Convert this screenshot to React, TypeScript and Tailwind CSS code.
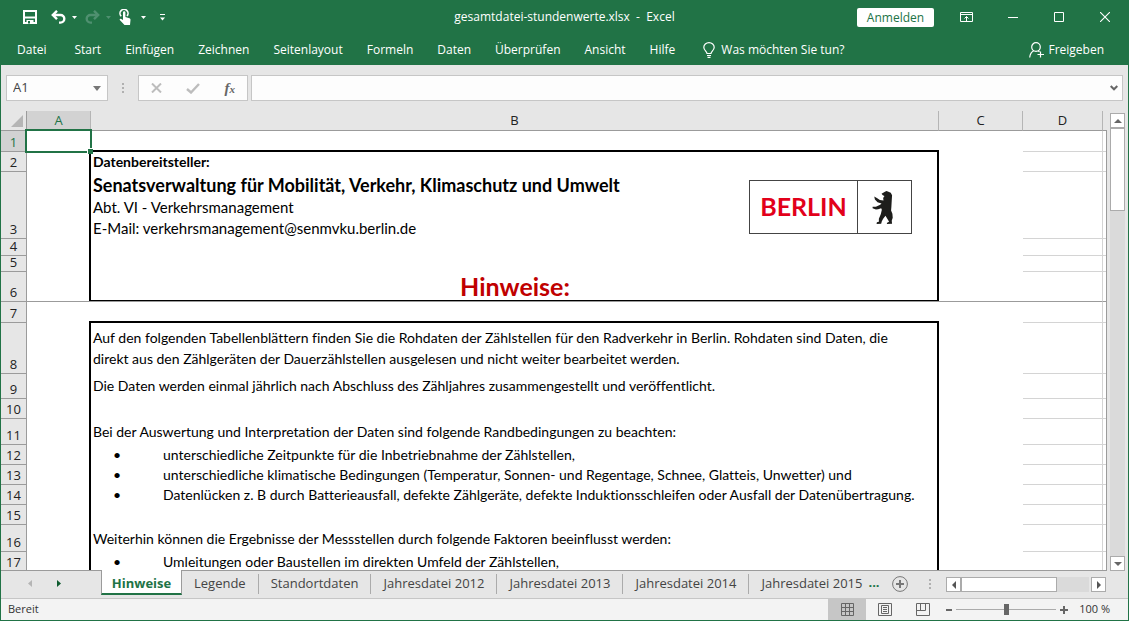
import type { ReactNode } from "react";

const UI = "font-['Open_Sans','Noto_Sans',sans-serif]";
const SHEET = "font-['Lato','Liberation_Sans',sans-serif] [font-variant-ligatures:none]";

const ribbonTabs = ["Start", "Einfügen", "Zeichnen", "Seitenlayout", "Formeln", "Daten", "Überprüfen", "Ansicht", "Hilfe"];
const sheetTabs = ["Legende", "Standortdaten", "Jahresdatei 2012", "Jahresdatei 2013", "Jahresdatei 2014", "Jahresdatei 2015"];

function Caret() {
  return (
    <svg viewBox="0 0 5 3" className="h-[3px] w-[5px]" fill="currentColor" aria-hidden="true">
      <path d="M0 0h5L2.5 3z" />
    </svg>
  );
}

function TitleBar() {
  return (
    <div className="grid h-[34px] grid-cols-[1fr_auto_1fr] items-center">
      <div className="flex items-center pl-[22px]">
        <button aria-label="Speichern" className="mr-3.5">
          <svg viewBox="0 0 14 14" className="size-3.5" fill="none" stroke="#fff" aria-hidden="true">
            <path d="M1 1h12v12H1z" strokeWidth="2" />
            <path d="M2 7.5h10" strokeWidth="2" />
            <path d="M3.5 10h7v4h-7z" fill="#fff" stroke="none" />
            <path d="M5 11h2v2.5H5z" fill="#217346" stroke="none" />
          </svg>
        </button>
        <button aria-label="Rückgängig" className="flex items-center gap-1.5 text-white">
          <svg viewBox="0 0 15 14" className="h-3.5 w-[15px]" fill="none" stroke="currentColor" strokeWidth="2.4" aria-hidden="true">
            <path d="M2 5h7.5a3.8 3.8 0 0 1 0 7.6H8" />
            <path d="M6 .8L1.8 5 6 9.2" />
          </svg>
          <Caret />
        </button>
        <button aria-label="Wiederholen" disabled className="ml-2 flex items-center gap-1.5 text-[#4f9070]">
          <svg viewBox="0 0 15 14" className="h-3.5 w-[15px]" fill="none" stroke="currentColor" strokeWidth="2.4" aria-hidden="true">
            <path d="M13 5H5.5a3.8 3.8 0 0 0 0 7.6H7" />
            <path d="M9 .8L13.2 5 9 9.2" />
          </svg>
          <Caret />
        </button>
        <button aria-label="Fingereingabe-/Mausmodus" className="ml-2 flex items-center gap-2.5 text-white">
          <svg viewBox="0 0 12 16" className="h-4 w-3" fill="none" aria-hidden="true">
            <path d="M2.2 7.2A4 4 0 1 1 8 7" stroke="currentColor" strokeWidth="1.6" />
            <path d="M4 3.5a1.2 1.2 0 0 1 2.4 0V8l4 1.2c.9.3 1.2.9 1.1 1.7L11 16H5.5L1 11.300c-.9-1 .2-2 1.200-1.300L4 11z" fill="currentColor" />
          </svg>
          <Caret />
        </button>
        <button aria-label="Symbolleiste anpassen" className="ml-3.5 text-white">
          <svg viewBox="0 0 5 7" className="h-[7px] w-[5px]" fill="currentColor" aria-hidden="true">
            <path d="M0 0h5v1H0zM0 3.5h5L2.5 6.5z" />
          </svg>
        </button>
      </div>
      <h1 className="text-xs whitespace-pre text-white">gesamtdatei-stundenwerte.xlsx  -  Excel</h1>
      <div className="flex items-center justify-end pr-[18px] text-white">
        <button className="h-[19px] w-[77px] rounded-xs bg-white text-xs leading-[19px] text-[#217346]">Anmelden</button>
        <button aria-label="Menüband-Anzeigeoptionen" className="ml-[26px]">
          <svg viewBox="0 0 13 10" className="h-2.5 w-[13px]" fill="none" stroke="#fff" aria-hidden="true">
            <path d="M.5.5h12v9H.5zM0 2.5h13M6.5 9V4.5M4.5 6.5l2-2 2 2" />
          </svg>
        </button>
        <button aria-label="Minimieren" className="ml-[35px]">
          <svg viewBox="0 0 10 10" className="size-2.5" stroke="#fff" aria-hidden="true"><path d="M0 5.5h10" /></svg>
        </button>
        <button aria-label="Maximieren" className="ml-9">
          <svg viewBox="0 0 10 10" className="size-2.5" fill="none" stroke="#fff" aria-hidden="true"><path d="M.5.5h9v9h-9z" /></svg>
        </button>
        <button aria-label="Schließen" className="ml-9">
          <svg viewBox="0 0 10 10" className="size-2.5" stroke="#fff" strokeWidth="1.1" aria-hidden="true"><path d="M0 0l10 10M10 0L0 10" /></svg>
        </button>
      </div>
    </div>
  );
}

function Ribbon() {
  return (
    <nav className="flex h-[31px] items-center gap-6 pr-6 pl-4 text-xs whitespace-nowrap text-white">
      <button className="mr-1">Datei</button>
      {ribbonTabs.map((t) => (
        <button key={t}>{t}</button>
      ))}
      <button className="flex items-center gap-1.5 pl-1">
        <svg viewBox="0 0 12 16" className="h-4 w-3" fill="none" stroke="#fff" strokeWidth="1.2" aria-hidden="true">
          <path d="M4 11.5c0-2-3.200-3-3.200-6.200a5.200 4.700 0 0 1 10.400 0c0 3.200-3.200 4.200-3.200 6.200zM4 13.500h4M4.500 15.400h3" />
        </svg>
        Was möchten Sie tun?
      </button>
      <button className="ml-auto flex items-center gap-1">
        <svg viewBox="0 0 15 16" className="h-4 w-[15px]" fill="none" stroke="#fff" strokeWidth="1.2" aria-hidden="true">
          <circle cx="7" cy="5" r="4.3" />
          <path d="M.7 15.5c.3-3.500 2-5.800 4-6.800M9 8.700l1.500 1.200M11.500 9.500v6M8.500 12.500h6.500" />
        </svg>
        Freigeben
      </button>
    </nav>
  );
}

function FormulaBar() {
  return (
    <div className="flex h-[46px] items-start pt-2.5 pr-[5px] pl-[5px]">
      <div className="flex h-[26px] w-[102px] items-center justify-between border border-[#c6c6c6] bg-[#fdfdfd] px-1.5">
        <input aria-label="Namenfeld" defaultValue="A1" className="w-16 bg-transparent text-[13px] text-[#444] outline-none" />
        <svg viewBox="0 0 8 5" className="h-[5px] w-2" fill="#777" aria-hidden="true"><path d="M0 0h8L4 5z" /></svg>
      </div>
      <div className="flex h-[26px] w-[30px] flex-col items-center justify-center gap-0.5">
        <i className="size-0.5 bg-[#b0b0b0]" />
        <i className="size-0.5 bg-[#b0b0b0]" />
        <i className="size-0.5 bg-[#b0b0b0]" />
      </div>
      <div className="mr-[3px] flex h-[26px] w-[110px] items-center justify-between border border-[#c6c6c6] bg-[#fdfdfd] px-3">
        <button aria-label="Abbrechen">
          <svg viewBox="0 0 11 10" className="h-2.5 w-[11px]" stroke="#bdbdbd" strokeWidth="2" aria-hidden="true"><path d="M1 .5l9 9M10 .5l-9 9" /></svg>
        </button>
        <button aria-label="Eingeben">
          <svg viewBox="0 0 14 11" className="h-[11px] w-3.5" fill="none" stroke="#bdbdbd" strokeWidth="2.4" aria-hidden="true"><path d="M1 6l4 3.500L13 1" /></svg>
        </button>
        <button aria-label="Funktion einfügen" className="font-['Liberation_Serif',serif] text-[15px] leading-4 font-bold text-[#666] italic">
          f<span className="text-[11px]">x</span>
        </button>
      </div>
      <div className="flex h-[26px] flex-1 items-center border border-[#c6c6c6] bg-[#fdfdfd] pr-1">
        <input aria-label="Bearbeitungsleiste" className="flex-1 bg-transparent px-1 text-xs outline-none" />
        <svg viewBox="0 0 8 6" className="h-1.5 w-2" fill="none" stroke="#666" strokeWidth="2" aria-hidden="true"><path d="M.7 1L4 4.300 7.300 1" /></svg>
      </div>
    </div>
  );
}

function BerlinLogo() {
  return (
    <div className="absolute top-2 right-[27px] flex h-[54px] w-[163px] border border-[#444] bg-white">
      <span className="flex flex-1 items-center justify-center pb-0.5 text-[25px] leading-none font-bold text-[#e2001a]">BERLIN</span>
      <span className="flex w-[54px] items-center justify-center border-l border-[#444] pr-1">
        <svg viewBox="427 76 62 100" className="h-[33px] w-[21px]" fill="#1d1d1b" aria-hidden="true">
          <path d="M455 84l9-5 6-3 6 2 7 3 4 8-1 16-1 18-1 12 4 10 1 12-3 9 1 9-16 1 1-4 6-3-5-8-6-10-7 9-4 8-2 7-14 1 1-5 6-2 0-9 6-14 3-13-2-5-9 3-7 1-10-4 0-4 10 0 13-6 4-4-12-4-8-8-2-9 8 4 9 6 11 2-1-8 4-6-5-2z" />
        </svg>
      </span>
    </div>
  );
}

function Bullet({ children }: { children: ReactNode }) {
  return (
    <span className="flex">
      <span className="w-[70px] pl-5 text-sm">•</span>
      {children}
    </span>
  );
}

type Row = { h: string; box?: boolean; line?: boolean; topOfBox?: boolean; content?: ReactNode };

const rows: Row[] = [
  { h: "h-[21px]", topOfBox: true, line: true },
  { h: "h-[20px]", box: true, line: true, content: <b>Datenbereitsteller:</b> },
  {
    h: "h-[67px]",
    box: true,
    line: true,
    content: (
      <>
        <div className="text-[15px] leading-[21px]">
          <p className="text-lg leading-6 font-bold">Senatsverwaltung für Mobilität, Verkehr, Klimaschutz und Umwelt</p>
          <p>Abt. VI - Verkehrsmanagement</p>
          <p>E-Mail: verkehrsmanagement@senmvku.berlin.de</p>
        </div>
        <BerlinLogo />
      </>
    ),
  },
  { h: "h-[17px]", box: true, line: true },
  { h: "h-[16px]", box: true, line: true },
  { h: "h-[30px]", box: true, content: <p className="flex-1 pr-0.5 text-center text-[25px] leading-[30px] font-bold text-[#c00000]">Hinweise:</p> },
  { h: "h-[21px]", topOfBox: true, line: true },
  {
    h: "h-[51px]",
    box: true,
    line: true,
    content: (
      <p className="pb-[5px] leading-[21px]">
        Auf den folgenden Tabellenblättern finden Sie die Rohdaten der Zählstellen für den Radverkehr in Berlin. Rohdaten sind Daten, die
        <br />
        direkt aus den Zählgeräten der Dauerzählstellen ausgelesen und nicht weiter bearbeitet werden.
      </p>
    ),
  },
  { h: "h-[25px]", box: true, line: true, content: <p className="pb-[3px]">Die Daten werden einmal jährlich nach Abschluss des Zähljahres zusammengestellt und veröffentlicht.</p> },
  { h: "h-[20px]", box: true, line: true },
  { h: "h-[26px]", box: true, line: true, content: <p className="pb-[3px]">Bei der Auswertung und Interpretation der Daten sind folgende Randbedingungen zu beachten:</p> },
  { h: "h-[20px]", box: true, line: true, content: <Bullet>unterschiedliche Zeitpunkte für die Inbetriebnahme der Zählstellen,</Bullet> },
  { h: "h-[20px]", box: true, line: true, content: <Bullet>unterschiedliche klimatische Bedingungen (Temperatur, Sonnen- und Regentage, Schnee, Glatteis, Unwetter) und</Bullet> },
  { h: "h-[20px]", box: true, line: true, content: <Bullet>Datenlücken z. B durch Batterieausfall, defekte Zählgeräte, defekte Induktionsschleifen oder Ausfall der Datenübertragung.</Bullet> },
  { h: "h-[20px]", box: true, line: true },
  { h: "h-[27px]", box: true, line: true, content: <p className="pb-[3px]">Weiterhin können die Ergebnisse der Messstellen durch folgende Faktoren beeinflusst werden:</p> },
  { h: "h-[20px]", box: true, line: true, content: <Bullet>Umleitungen oder Baustellen im direkten Umfeld der Zählstellen,</Bullet> },
];

function SheetRow({ row, n }: { row: Row; n: number }) {
  const frozen = n === 6;
  const bottom = frozen ? "border-b border-[#9b9b9b]" : "";
  const grid = frozen ? "border-[#9b9b9b]" : "border-[#d4d4d4]";
  return (
    <tr className={row.h}>
      <th
        scope="row"
        className={`border-r border-b border-[#9b9b9b] px-0 pt-0 pb-0.5 align-bottom text-[13px] leading-[13px] font-normal ${
          n === 1 ? "bg-[#d2d2d2] text-[#217346]" : "bg-[#e6e6e6] text-[#222]"
        }`}
      >
        {n}
      </th>
      <td className={`relative p-0 ${bottom} ${row.box ? "shadow-[inset_-2px_0_0_#000]" : ""}`}>
        {n === 1 && (
          <span className="absolute -top-0.5 -right-px -bottom-px -left-0.5 z-10 border-2 border-[#217346]">
            <i className="absolute -right-[3px] -bottom-[3px] size-[6px] border-t border-l border-white bg-[#217346]" />
          </span>
        )}
      </td>
      <td className={`relative p-0 ${bottom} ${row.box ? "shadow-[inset_-2px_0_0_#000]" : ""}`}>
        {row.topOfBox && <i className="absolute right-0 bottom-0 -left-0.5 h-0.5 bg-black" />}
        {frozen && <i className="absolute right-0 bottom-0 -left-0.5 h-px bg-black" />}
        {row.content && <div className={`absolute inset-0 flex items-end pl-0.5 text-sm leading-5 whitespace-nowrap text-black ${SHEET}`}>{row.content}</div>}
      </td>
      <td className={`p-0 ${bottom}`} />
      <td className={`border-r border-r-[#d4d4d4] p-0 ${row.line || frozen ? `border-b ${grid}` : ""}`} />
      <td className={`p-0 ${row.line || frozen ? `border-b ${grid}` : ""}`} />
    </tr>
  );
}

function ColHead({ children, active, last }: { children?: ReactNode; active?: boolean; last?: boolean }) {
  return (
    <th
      scope="col"
      className={`border-b border-[#9b9b9b] px-0 pt-0 pb-0.5 text-[13px] leading-4 font-normal ${last ? "" : "border-r border-r-[#b5b5b5]"} ${
        active ? "bg-[#d2d2d2] text-[#217346]" : "text-[#222]"
      }`}
    >
      {children}
    </th>
  );
}

function Sheet() {
  return (
    <main className="flex min-h-0 flex-1">
      <div className="min-w-0 flex-1 overflow-hidden border-b border-[#9b9b9b]">
        <table className="w-full table-fixed border-separate border-spacing-0">
          <colgroup>
            <col className="w-[26px]" />
            <col className="w-16" />
            <col />
            <col className="w-[84px]" />
            <col className="w-[80px]" />
            <col className="w-[3px]" />
          </colgroup>
          <thead>
            <tr className="h-5">
              <td className="relative border-r border-b border-[#9b9b9b] p-0">
                <svg viewBox="0 0 12 12" className="absolute right-[3px] bottom-[3px] size-3" fill="#b5b5b5" aria-hidden="true"><path d="M12 0v12H0z" /></svg>
              </td>
              <ColHead active>A</ColHead>
              <ColHead>B</ColHead>
              <ColHead>C</ColHead>
              <ColHead>D</ColHead>
              <ColHead last />
            </tr>
          </thead>
          <tbody className="bg-white">
            {rows.map((r, i) => (
              <SheetRow key={i} row={r} n={i + 1} />
            ))}
          </tbody>
        </table>
      </div>
      <div className="mt-[19px] w-px bg-[#9b9b9b]" />
      <div className="mt-0.5 mr-[3px] ml-[3px] flex w-[15px] flex-col bg-[#dadada]">
        <button aria-label="Nach oben" className="flex h-[15px] items-center justify-center border border-[#ababab] bg-white">
          <svg viewBox="0 0 8 4" className="h-1 w-2" fill="#666" aria-hidden="true"><path d="M0 4l4-4 4 4z" /></svg>
        </button>
        <div className="h-[83px] border border-[#ababab] bg-white" />
        <button aria-label="Nach unten" className="mt-auto flex h-[15px] items-center justify-center border border-[#ababab] bg-white">
          <svg viewBox="0 0 8 4" className="h-1 w-2" fill="#666" aria-hidden="true"><path d="M0 0l4 4 4-4z" /></svg>
        </button>
      </div>
    </main>
  );
}

function SheetTabs() {
  return (
    <div className="flex h-[27px] items-start text-[13px] whitespace-nowrap text-[#444]">
      <div className="flex h-[25px] w-[100px] items-center gap-[25px] pl-[27px]">
        <button aria-label="Vorheriges Blatt"><svg viewBox="0 0 4 7" className="h-[7px] w-1" fill="#b5b5b5" aria-hidden="true"><path d="M4 0v7L0 3.5z" /></svg></button>
        <button aria-label="Nächstes Blatt"><svg viewBox="0 0 4 7" className="h-[7px] w-1" fill="#0e5c2f" aria-hidden="true"><path d="M0 0v7l4-3.5z" /></svg></button>
      </div>
      <button className="-mt-px h-[25px] w-[81px] border-x border-b-2 border-x-[#9b9b9b] border-b-[#217346] bg-white pt-1 font-bold text-[#217346]">Hinweise</button>
      {sheetTabs.map((t, i) => (
        <button key={t} className={`mt-[3px] h-5 px-3 pb-0.5 leading-[18px] ${i < sheetTabs.length - 1 ? "border-r border-[#ababab]" : ""}`}>{t}</button>
      ))}
      <span className="mt-0.5 -ml-1.5 font-bold text-[#217346]">...</span>
      <button aria-label="Neues Blatt" className="mt-[5px] ml-3">
        <svg viewBox="0 0 16 16" className="size-4" fill="none" stroke="#777" aria-hidden="true">
          <circle cx="8" cy="8" r="7.4" />
          <path d="M4 8h8M8 4v8" strokeWidth="2" />
        </svg>
      </button>
      <div className="mt-2 ml-auto flex flex-col gap-0.5 pr-[15px]">
        <i className="size-0.5 bg-[#b0b0b0]" />
        <i className="size-0.5 bg-[#b0b0b0]" />
        <i className="size-0.5 bg-[#b0b0b0]" />
      </div>
      <div className="mt-1.5 mr-[22px] flex h-[15px] w-[160px]">
        <button aria-label="Nach links" className="flex w-[15px] items-center justify-center border border-[#ababab] bg-white">
          <svg viewBox="0 0 4 8" className="h-2 w-1" fill="#555" aria-hidden="true"><path d="M4 0v8L0 4z" /></svg>
        </button>
        <div className="w-24 border border-[#ababab] bg-white" />
        <div className="mr-0.5 flex-1 bg-[#dadada]" />
        <button aria-label="Nach rechts" className="flex w-[15px] items-center justify-center border border-[#ababab] bg-white">
          <svg viewBox="0 0 4 8" className="h-2 w-1" fill="#555" aria-hidden="true"><path d="M0 0v8l4-4z" /></svg>
        </button>
      </div>
    </div>
  );
}

function StatusBar() {
  return (
    <footer className="flex h-[22px] items-center border-t border-[#c6c6c6] bg-[#f3f3f3] pr-[18px] pl-[7px] text-[11px] text-[#333]">
      <span className="mr-auto">Bereit</span>
      <button aria-label="Normal" className="flex h-full w-[38px] items-center justify-center bg-[#c6c6c6]">
        <svg viewBox="0 0 13 13" className="size-[13px]" fill="none" stroke="#666" aria-hidden="true"><path d="M.5.5h12v12H.5zM4.5 0v13M8.5 0v13M0 4.5h13M0 8.5h13" /></svg>
      </button>
      <button aria-label="Seitenlayout" className="flex h-full w-[38px] items-center justify-center">
        <svg viewBox="0 0 14 13" className="h-[13px] w-3.5" fill="none" stroke="#666" aria-hidden="true"><path d="M.5.5h13v12H.5zM3.5 2.5h7v8h-7zM5 4.5h4M5 6.5h4M5 8.5h4" /></svg>
      </button>
      <button aria-label="Umbruchvorschau" className="flex h-full w-[38px] items-center justify-center">
        <svg viewBox="0 0 14 13" className="h-[13px] w-3.5" fill="none" stroke="#666" aria-hidden="true"><path d="M.5.5h13v12H.5zM4.5 0v7.5M9.5 0v7.5M0 7.5h9.5" /></svg>
      </button>
      <button aria-label="Verkleinern" className="ml-1 h-0.5 w-1.5 bg-[#666]" />
      <input
        type="range"
        aria-label="Zoom"
        defaultValue={50}
        className="mx-1 h-px w-[100px] appearance-none bg-[#ababab] [&::-webkit-slider-thumb]:h-[11px] [&::-webkit-slider-thumb]:w-[5px] [&::-webkit-slider-thumb]:appearance-none [&::-webkit-slider-thumb]:bg-[#666]"
      />
      <button aria-label="Vergrößern">
        <svg viewBox="0 0 8 8" className="size-2" stroke="#666" strokeWidth="2" aria-hidden="true"><path d="M0 4h8M4 0v8" /></svg>
      </button>
      <span className="ml-[11px]">100 %</span>
    </footer>
  );
}

export default function App() {
  return (
    <div className={`flex h-screen flex-col border-x border-b border-[#217346] bg-[#e6e6e6] ${UI}`}>
      <header className="bg-[#217346]">
        <TitleBar />
        <Ribbon />
      </header>
      <FormulaBar />
      <Sheet />
      <SheetTabs />
      <StatusBar />
    </div>
  );
}
